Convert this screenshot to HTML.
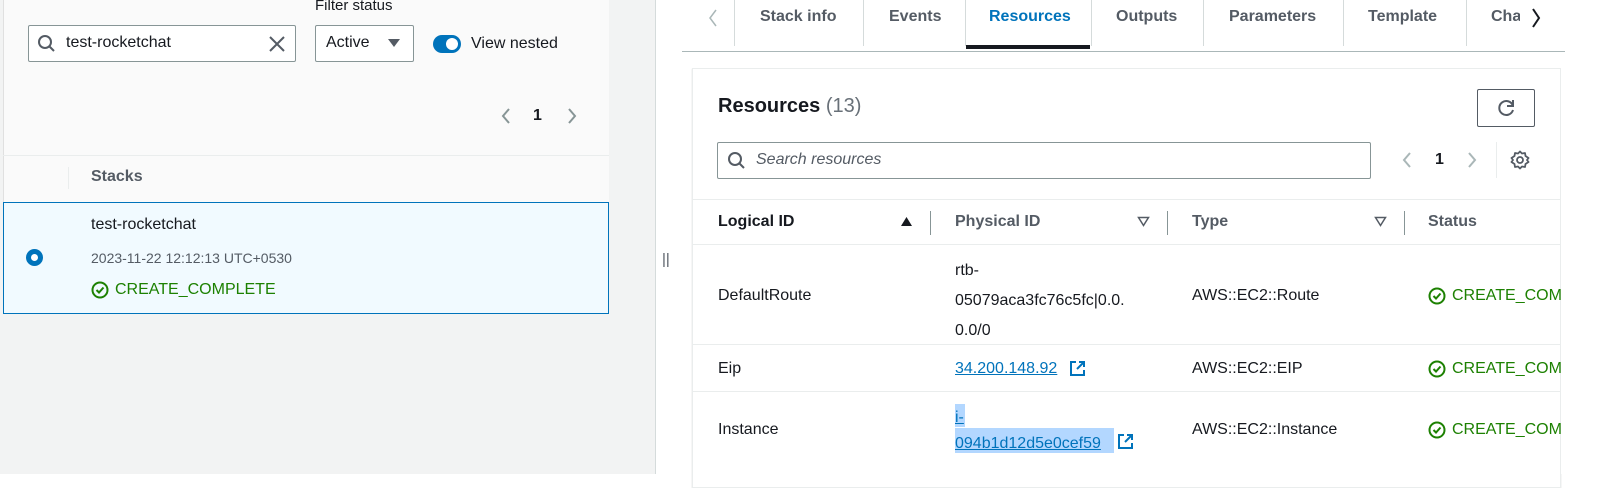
<!DOCTYPE html>
<html><head><meta charset="utf-8"><style>
*{box-sizing:border-box;margin:0;padding:0}
body{width:1600px;height:474px;overflow:hidden;background:#fff;font-family:"Liberation Sans",sans-serif;color:#16191f;font-size:16px;position:relative}
.a{position:absolute;white-space:nowrap}
.g{color:#1d8102}
.lnk{color:#0073bb;text-decoration:underline}
svg{display:block}
</style></head><body>
<div class="a" style="left:0;top:0;width:656px;height:474px;background:#f2f3f3;border-right:1px solid #d5dbdb"></div>
<div class="a" style="left:3px;top:0;width:606px;height:314px;background:#fafafa;border-left:1px solid #e0e0e0"></div>
<div class="a" style="left:315px;top:-3px;font-size:15px">Filter status</div>
<div class="a" style="left:28px;top:25px;width:268px;height:37px;border:1px solid #879596;border-radius:2px;background:#fff"></div>
<svg class="a" style="left:37px;top:34px" width="20" height="20" viewBox="0 0 20 20"><circle cx="8" cy="8" r="6" fill="none" stroke="#545b64" stroke-width="2"/><path d="M12.5 12.5L17 17" stroke="#545b64" stroke-width="2"/></svg>
<div class="a" style="left:66px;top:34px;font-size:16px">test-rocketchat</div>
<svg class="a" style="left:268px;top:35px" width="18" height="18"><path d="M2 2L16 16M16 2L2 16" stroke="#545b64" stroke-width="2"/></svg>
<div class="a" style="left:315px;top:25px;width:99px;height:37px;border:1px solid #879596;border-radius:2px;background:#fff"></div>
<div class="a" style="left:326px;top:34px;font-size:16px">Active</div>
<svg class="a" style="left:387px;top:38px" width="14" height="10"><path d="M1 1H13L7 9Z" fill="#545b64"/></svg>
<div class="a" style="left:433px;top:35px;width:28px;height:18px;border-radius:9px;background:#0073bb"></div>
<div class="a" style="left:446px;top:38px;width:12px;height:12px;border-radius:6px;background:#fff"></div>
<div class="a" style="left:471px;top:35px;font-size:16px">View nested</div>
<svg class="a" style="left:500px;top:107px" width="12" height="18"><path d="M9 2L3 9L9 16" fill="none" stroke="#879596" stroke-width="2"/></svg>
<div class="a" style="left:533px;top:107px;font-weight:bold;font-size:16px">1</div>
<svg class="a" style="left:566px;top:107px" width="12" height="18"><path d="M3 2L9 9L3 16" fill="none" stroke="#879596" stroke-width="2"/></svg>
<div class="a" style="left:3px;top:155px;width:606px;height:1px;background:#eaeded"></div>
<div class="a" style="left:68px;top:167px;width:1px;height:22px;background:#eaeded"></div>
<div class="a" style="left:91px;top:168px;font-weight:bold;color:#545b64;font-size:16px">Stacks</div>
<div class="a" style="left:3px;top:202px;width:606px;height:112px;background:#f1faff;border:1px solid #0073bb"></div>
<div class="a" style="left:91px;top:216px;font-size:16px">test-rocketchat</div>
<div class="a" style="left:26px;top:249px;width:17px;height:17px;border-radius:50%;border:5px solid #0073bb;background:#fff"></div>
<div class="a" style="left:91px;top:250px;font-size:14px;color:#545b64">2023-11-22 12:12:13 UTC+0530</div>
<svg class="a" style="left:91px;top:281px" width="18" height="18"><circle cx="9" cy="9" r="7.5" fill="none" stroke="#1d8102" stroke-width="2"/><path d="M5.5 9L8 11.5L12.5 6.5" fill="none" stroke="#1d8102" stroke-width="2"/></svg>
<div class="a g" style="left:115px;top:281px;font-size:16px">CREATE_COMPLETE</div>
<div class="a" style="left:662px;top:251px;font-size:15px;color:#545b64">||</div>
<svg class="a" style="left:707px;top:8px" width="12" height="20"><path d="M9 2L3 10L9 18" fill="none" stroke="#aab7b8" stroke-width="1.5"/></svg>
<div class="a" style="left:734px;top:0;width:1px;height:46px;background:#d5dbdb"></div>
<div class="a" style="left:760px;top:8px;font-weight:bold;color:#545b64;font-size:16px">Stack info</div>
<div class="a" style="left:863px;top:0;width:1px;height:46px;background:#d5dbdb"></div>
<div class="a" style="left:889px;top:8px;font-weight:bold;color:#545b64;font-size:16px">Events</div>
<div class="a" style="left:965px;top:0;width:1px;height:46px;background:#d5dbdb"></div>
<div class="a" style="left:989px;top:8px;font-weight:bold;color:#0073bb;font-size:16px">Resources</div>
<div class="a" style="left:966px;top:45px;width:124px;height:4px;background:#16191f"></div>
<div class="a" style="left:1091px;top:0;width:1px;height:46px;background:#d5dbdb"></div>
<div class="a" style="left:1116px;top:8px;font-weight:bold;color:#545b64;font-size:16px">Outputs</div>
<div class="a" style="left:1203px;top:0;width:1px;height:46px;background:#d5dbdb"></div>
<div class="a" style="left:1229px;top:8px;font-weight:bold;color:#545b64;font-size:16px">Parameters</div>
<div class="a" style="left:1343px;top:0;width:1px;height:46px;background:#d5dbdb"></div>
<div class="a" style="left:1368px;top:8px;font-weight:bold;color:#545b64;font-size:16px">Template</div>
<div class="a" style="left:1466px;top:0;width:1px;height:46px;background:#d5dbdb"></div>
<div class="a" style="left:1491px;top:8px;font-weight:bold;color:#545b64;font-size:16px;width:29px;overflow:hidden">Change</div>
<div class="a" style="left:1520px;top:0;width:45px;height:46px;background:#fff"></div>
<svg class="a" style="left:1530px;top:7px" width="12" height="22"><path d="M3 2L9 11L3 20" fill="none" stroke="#16191f" stroke-width="2"/></svg>
<div class="a" style="left:1565px;top:0;width:35px;height:474px;background:#fff"></div>
<div class="a" style="left:682px;top:51px;width:883px;height:1px;background:#aab7b8"></div>
<div class="a" style="left:692px;top:68px;width:869px;height:420px;border:1px solid #eaeded;background:#fff;box-shadow:0 1px 1px rgba(0,28,36,.2)"></div>
<div class="a" style="left:718px;top:95px;font-size:20px;font-weight:bold">Resources <span style="font-weight:normal;color:#687078">(13)</span></div>
<div class="a" style="left:1477px;top:89px;width:58px;height:38px;border:1px solid #545b64;border-radius:2px;background:#fff"></div>
<svg class="a" style="left:1496px;top:97px" width="22" height="22" viewBox="0 0 22 22"><path d="M17 9A7 7 0 1 0 17 13" fill="none" stroke="#545b64" stroke-width="2"/><path d="M17 3V9H11" fill="none" stroke="#545b64" stroke-width="2"/></svg>
<div class="a" style="left:717px;top:142px;width:654px;height:37px;border:1px solid #879596;border-radius:2px;background:#fff"></div>
<svg class="a" style="left:727px;top:151px" width="20" height="20"><circle cx="8" cy="8" r="6" fill="none" stroke="#545b64" stroke-width="2"/><path d="M12.5 12.5L17 17" stroke="#545b64" stroke-width="2"/></svg>
<div class="a" style="left:756px;top:151px;font-size:16px;font-style:italic;color:#545b64">Search resources</div>
<svg class="a" style="left:1401px;top:151px" width="12" height="18"><path d="M9 2L3 9L9 16" fill="none" stroke="#aab7b8" stroke-width="2"/></svg>
<div class="a" style="left:1435px;top:151px;font-weight:bold;font-size:16px">1</div>
<svg class="a" style="left:1466px;top:151px" width="12" height="18"><path d="M3 2L9 9L3 16" fill="none" stroke="#aab7b8" stroke-width="2"/></svg>
<div class="a" style="left:1496px;top:142px;width:1px;height:36px;background:#eaeded"></div>
<svg class="a" style="left:1510px;top:150px" width="20" height="20" viewBox="0 0 20 20"><path d="M10 1.5L12 3.5L15 3L15.5 6L18.5 8L17 10L18.5 12L15.5 14L15 17L12 16.5L10 18.5L8 16.5L5 17L4.5 14L1.5 12L3 10L1.5 8L4.5 6L5 3L8 3.5Z" fill="none" stroke="#545b64" stroke-width="1.8" stroke-linejoin="round"/><circle cx="10" cy="10" r="3" fill="none" stroke="#545b64" stroke-width="1.8"/></svg>
<div class="a" style="left:693px;top:199px;width:868px;height:1px;background:#eaeded"></div>
<div class="a" style="left:718px;top:213px;font-weight:bold;font-size:16px">Logical ID</div>
<svg class="a" style="left:900px;top:216px" width="13" height="11"><path d="M1 10H12L6.5 1Z" fill="#16191f"/></svg>
<div class="a" style="left:930px;top:211px;width:1px;height:24px;background:#879596"></div>
<div class="a" style="left:955px;top:213px;font-weight:bold;color:#545b64;font-size:16px">Physical ID</div>
<svg class="a" style="left:1137px;top:216px" width="13" height="11"><path d="M1.5 1.5H11.5L6.5 9.5Z" fill="none" stroke="#545b64" stroke-width="1.5"/></svg>
<div class="a" style="left:1167px;top:211px;width:1px;height:24px;background:#879596"></div>
<div class="a" style="left:1192px;top:213px;font-weight:bold;color:#545b64;font-size:16px">Type</div>
<svg class="a" style="left:1374px;top:216px" width="13" height="11"><path d="M1.5 1.5H11.5L6.5 9.5Z" fill="none" stroke="#545b64" stroke-width="1.5"/></svg>
<div class="a" style="left:1404px;top:211px;width:1px;height:24px;background:#879596"></div>
<div class="a" style="left:1428px;top:213px;font-weight:bold;color:#545b64;font-size:16px">Status</div>
<div class="a" style="left:693px;top:244px;width:868px;height:1px;background:#eaeded"></div>
<div class="a" style="left:718px;top:287px">DefaultRoute</div>
<div class="a" style="left:955px;top:256px;line-height:30px">rtb-<br>05079aca3fc76c5fc|0.0.<br>0.0/0</div>
<div class="a" style="left:1192px;top:287px">AWS::EC2::Route</div>
<svg class="a" style="left:1428px;top:287px" width="18" height="18"><circle cx="9" cy="9" r="7.5" fill="none" stroke="#1d8102" stroke-width="2"/><path d="M5.5 9L8 11.5L12.5 6.5" fill="none" stroke="#1d8102" stroke-width="2"/></svg>
<div class="a g" style="left:1452px;top:287px;font-size:16px">CREATE_COMPLETE</div>
<div class="a" style="left:693px;top:344px;width:868px;height:1px;background:#eaeded"></div>
<div class="a" style="left:718px;top:360px">Eip</div>
<div class="a lnk" style="left:955px;top:360px">34.200.148.92</div>
<svg class="a" style="left:1069px;top:360px" width="17" height="17"><path d="M7 2H2V15H15V10" fill="none" stroke="#0073bb" stroke-width="2"/><path d="M10 2H15V7M15 2L8 9" fill="none" stroke="#0073bb" stroke-width="2"/></svg>
<div class="a" style="left:1192px;top:360px">AWS::EC2::EIP</div>
<svg class="a" style="left:1428px;top:360px" width="18" height="18"><circle cx="9" cy="9" r="7.5" fill="none" stroke="#1d8102" stroke-width="2"/><path d="M5.5 9L8 11.5L12.5 6.5" fill="none" stroke="#1d8102" stroke-width="2"/></svg>
<div class="a g" style="left:1452px;top:360px;font-size:16px">CREATE_COMPLETE</div>
<div class="a" style="left:693px;top:391px;width:868px;height:1px;background:#eaeded"></div>
<div class="a" style="left:718px;top:421px">Instance</div>
<div class="a" style="left:955px;top:404px;width:10px;height:23px;background:#b3d7ff"></div>
<div class="a" style="left:955px;top:428px;width:159px;height:25px;background:#b3d7ff"></div>
<div class="a lnk" style="left:955px;top:405px;line-height:26px">i-<br>094b1d12d5e0cef59</div>
<svg class="a" style="left:1117px;top:433px" width="17" height="17"><path d="M7 2H2V15H15V10" fill="none" stroke="#0073bb" stroke-width="2"/><path d="M10 2H15V7M15 2L8 9" fill="none" stroke="#0073bb" stroke-width="2"/></svg>
<div class="a" style="left:1192px;top:421px">AWS::EC2::Instance</div>
<svg class="a" style="left:1428px;top:421px" width="18" height="18"><circle cx="9" cy="9" r="7.5" fill="none" stroke="#1d8102" stroke-width="2"/><path d="M5.5 9L8 11.5L12.5 6.5" fill="none" stroke="#1d8102" stroke-width="2"/></svg>
<div class="a g" style="left:1452px;top:421px;font-size:16px">CREATE_COMPLETE</div>
<div class="a" style="left:1561px;top:52px;width:39px;height:422px;background:#fff"></div>
</body></html>
